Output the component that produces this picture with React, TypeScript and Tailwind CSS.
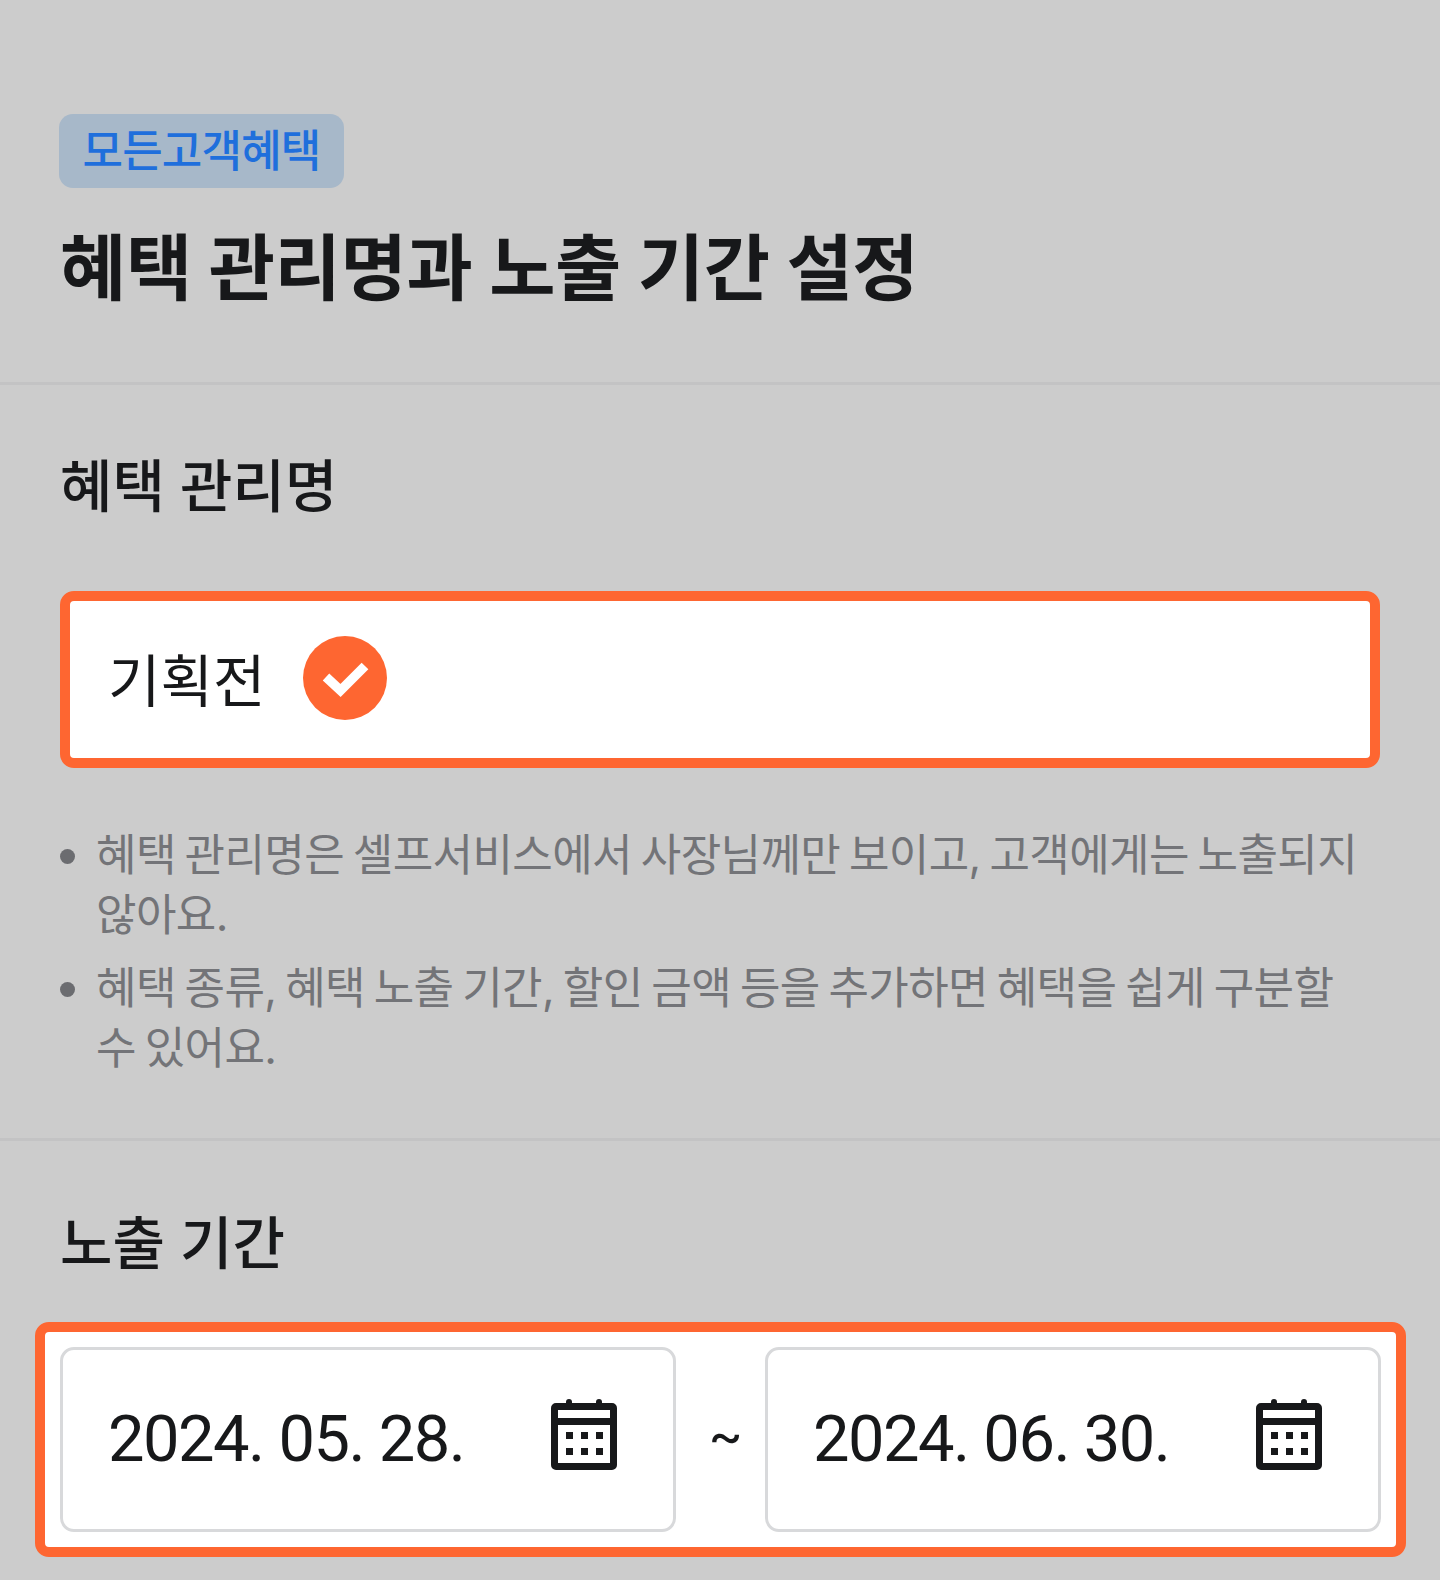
const font = "font-['Inter','Noto_Sans_CJK_KR',sans-serif]"

function CalendarIcon() {
  return (
    <svg width="66" height="71" viewBox="0 0 66 71" fill="none" className="mb-[10px] shrink-0">
      <rect x="15" y="0" width="6" height="9" rx="3" fill="#17181a" />
      <rect x="45" y="0" width="6" height="9" rx="3" fill="#17181a" />
      <path
        fillRule="evenodd"
        clipRule="evenodd"
        d="M5 4h56a5 5 0 0 1 5 5v57a5 5 0 0 1-5 5H5a5 5 0 0 1-5-5V9a5 5 0 0 1 5-5Zm2 7v8h52v-8H7Zm0 15v38h52V26H7Z"
        fill="#17181a"
      />
      <rect x="15" y="33" width="7" height="7" fill="#17181a" />
      <rect x="30" y="33" width="7" height="7" fill="#17181a" />
      <rect x="45" y="33" width="7" height="7" fill="#17181a" />
      <rect x="15" y="49" width="7" height="7" fill="#17181a" />
      <rect x="30" y="49" width="7" height="7" fill="#17181a" />
      <rect x="45" y="49" width="7" height="7" fill="#17181a" />
    </svg>
  )
}

function DateField({ value }: { value: string }) {
  return (
    <div className="flex h-[185px] w-[616px] items-center justify-between rounded-[14px] border-[3px] border-[#d8d9db] bg-white pl-[45px] pr-[56px]">
      <span className="font-['Roboto',sans-serif] text-[65px] tracking-[-1.5px] text-[#17181a]">{value}</span>
      <CalendarIcon />
    </div>
  )
}

export default function App() {
  return (
    <div className={`${font} h-[1580px] w-[1440px] overflow-hidden bg-[#cccccc]`}>
      <header className="border-b-[3px] border-[#c3c3c4] px-[60px] pb-[67px] pt-[114px]">
        <span className="-ml-[1px] block w-[285px] rounded-[14px] bg-[#a7b8c9] py-[6px] text-center text-[44px] font-medium leading-[62px] tracking-[-0.8px] text-[#1f6fdc]">
          모든고객혜택
        </span>
        <h1 className="mt-[33px] text-[72px] font-bold leading-[94px] tracking-[-0.3px] text-[#17181a]">
          혜택 관리명과 노출 기간 설정
        </h1>
      </header>

      <section className="border-b-[3px] border-[#c3c3c4] px-[60px] pb-[60px] pt-[62px]">
        <h2 className="text-[57px] font-medium leading-[80px] text-[#17181a]">혜택 관리명</h2>
        <div className="mt-[64px] flex h-[177px] w-[1320px] items-center gap-[38px] rounded-[14px] border-[10px] border-[#fe6631] bg-white pl-[38px]">
          <span className="pt-[4px] text-[57px] leading-[80px] text-[#17181a]">기획전</span>
          <span className="-mt-[3px] flex h-[84px] w-[84px] items-center justify-center rounded-full bg-[#fe6631]">
            <svg width="84" height="84" viewBox="0 0 84 84" fill="none">
              <path d="M23 41 37.5 54.5 62 30" stroke="#ffffff" strokeWidth="9.5" />
            </svg>
          </span>
        </div>
        <ul className="mt-[57px] space-y-[13px] text-[44px] leading-[60px] tracking-[-0.6px] text-[#737478] [word-spacing:-3px]">
          <li className="flex">
            <span className="mr-[21px] mt-[24px] h-[15px] w-[15px] shrink-0 rounded-full bg-[#6b6c70]" />
            <span>혜택 관리명은 셀프서비스에서 사장님께만 보이고, 고객에게는 노출되지 않아요.</span>
          </li>
          <li className="flex">
            <span className="mr-[21px] mt-[24px] h-[15px] w-[15px] shrink-0 rounded-full bg-[#6b6c70]" />
            <span>혜택 종류, 혜택 노출 기간, 할인 금액 등을 추가하면 혜택을 쉽게 구분할 수 있어요.</span>
          </li>
        </ul>
      </section>

      <section className="pt-[63px]">
        <h2 className="px-[60px] text-[57px] font-medium leading-[80px] text-[#17181a]">노출 기간</h2>
        <div className="ml-[35px] mt-[38px] flex h-[235px] w-[1371px] items-center justify-between rounded-[14px] border-[10px] border-[#fe6631] bg-white px-[15px]">
          <DateField value="2024. 05. 28." />
          <span className="mb-[10px] pl-[10px] text-[54px] text-[#17181a]">~</span>
          <DateField value="2024. 06. 30." />
        </div>
      </section>
    </div>
  )
}
